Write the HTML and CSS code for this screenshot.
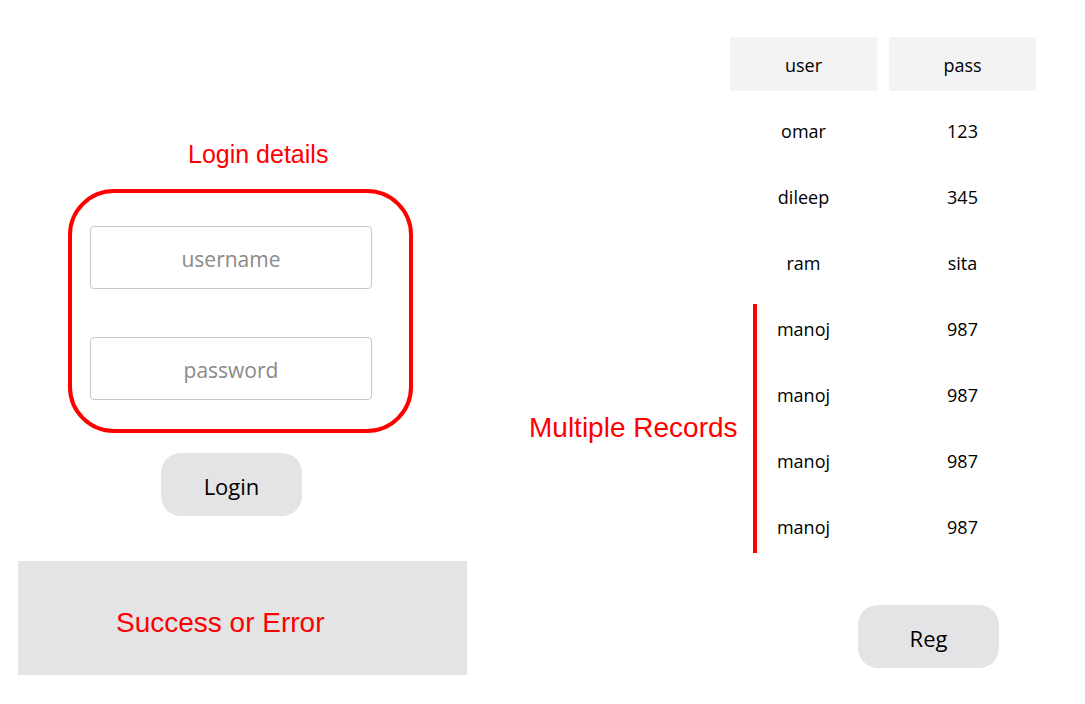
FILE: index.html
```html
<!DOCTYPE html>
<html>
<head>
<meta charset="utf-8">
<link rel="stylesheet" href="styles.css">
</head>
<body>
<div class="page">
  <section class="left">
    <h2 class="note note-heading">Login details</h2>
    <div class="login-box">
      <input class="field" type="text" placeholder="username">
      <input class="field" type="password" placeholder="password">
    </div>
    <button class="btn btn-login">Login</button>
    <div class="status"><span class="note status-text">Success or Error</span></div>
  </section>
  <section class="right">
    <div class="table-wrap">
      <table class="records">
        <thead>
          <tr><th>user</th><th>pass</th></tr>
        </thead>
        <tbody>
          <tr><td>omar</td><td>123</td></tr>
          <tr><td>dileep</td><td>345</td></tr>
          <tr><td>ram</td><td>sita</td></tr>
          <tr><td>manoj</td><td>987</td></tr>
          <tr><td>manoj</td><td>987</td></tr>
          <tr><td>manoj</td><td>987</td></tr>
          <tr><td>manoj</td><td>987</td></tr>
        </tbody>
      </table>
      <div class="multi-line"></div>
      <div class="note multi-label">Multiple Records</div>
    </div>
    <button class="btn btn-reg">Reg</button>
  </section>
</div>
</body>
</html>
```
FILE: styles.css
```css
html, body {
  margin: 0;
  padding: 0;
  background: #ffffff;
}
body {
  font-family: "Open Sans", "Noto Sans", sans-serif;
  color: #000;
}
.page {
  display: flex;
  width: 1085px;
  height: 704px;
}
.left {
  width: 449px;
  margin-left: 18px;
  display: flex;
  flex-direction: column;
  align-items: flex-start;
}
.note {
  font-family: "Liberation Sans", Arial, sans-serif;
  color: #ff0000;
  font-weight: normal;
}
.note-heading {
  margin: 139px 0 0 170px;
  font-size: 25px;
  line-height: 30px;
}
.login-box {
  margin: 20px 0 0 50px;
  width: 345px;
  height: 244px;
  box-sizing: border-box;
  border: 4px solid #ff0000;
  border-radius: 46px;
  padding: 33px 0 0 18px;
  display: flex;
  flex-direction: column;
  gap: 48px;
}
.field {
  width: 282px;
  height: 63px;
  box-sizing: border-box;
  border: 1px solid #c8c8c8;
  border-radius: 4px;
  background: #fff;
  text-align: center;
  font-family: "Open Sans", "Noto Sans", sans-serif;
  font-size: 21px;
  color: #333;
  outline: none;
  margin: 0;
  padding: 3px 0 0 0;
}
.field::placeholder {
  color: #8a8a8a;
}
.btn {
  width: 141px;
  height: 63px;
  border: none;
  border-radius: 20px;
  background: #e4e4e6;
  font-family: "Open Sans", "Noto Sans", sans-serif;
  font-size: 22px;
  color: #000;
  padding: 2px 0 0 0;
  cursor: pointer;
}
.btn-login {
  margin: 20px 0 0 143px;
}
.status {
  margin-top: 45px;
  width: 449px;
  height: 114px;
  background: #e4e4e6;
  display: flex;
  align-items: center;
  padding: 10px 0 0 98px;
  box-sizing: border-box;
}
.status-text {
  font-size: 28px;
}
.right {
  margin-left: 251px;
  display: flex;
  flex-direction: column;
  align-items: flex-start;
}
.table-wrap {
  position: relative;
  margin-top: 25px;
}
.records {
  border-collapse: separate;
  border-spacing: 12px;
  font-size: 18px;
}
.records th,
.records td {
  width: 147px;
  height: 52px;
  padding: 2px 0 0 0;
  text-align: center;
  font-weight: normal;
}
.records th {
  background: #f3f3f3;
}
.multi-line {
  position: absolute;
  left: 35px;
  top: 279px;
  width: 4px;
  height: 249px;
  background: #ff0000;
}
.multi-label {
  position: absolute;
  left: -189px;
  top: 387px;
  font-size: 28px;
  line-height: 32px;
  white-space: nowrap;
}
.btn-reg {
  margin: 40px 0 0 140px;
}
```
